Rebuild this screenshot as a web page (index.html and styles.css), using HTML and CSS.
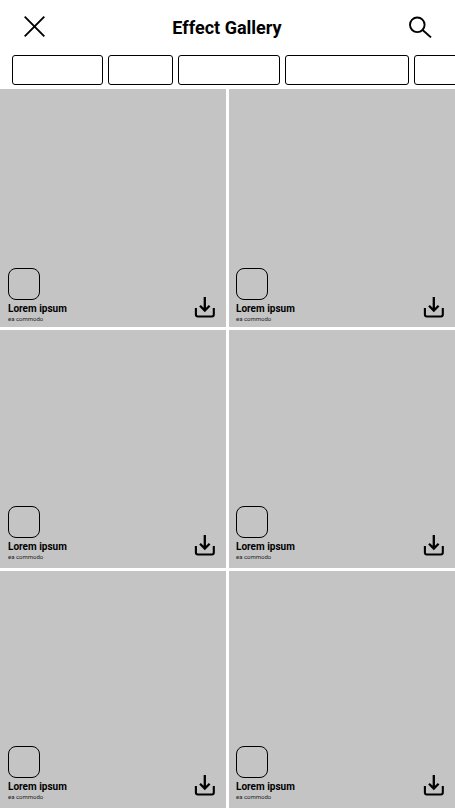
FILE: index.html
```html
<!DOCTYPE html>
<html lang="en">
<head>
    <meta charset="UTF-8">
    <meta name="viewport" content="width=device-width, initial-scale=1.0">
    <title>Effect Gallery</title>
    <link rel="stylesheet" href="styles.css">
</head>
<body>

<svg class="defs" width="0" height="0">
    <symbol id="icon-download" viewBox="0 0 21 21">
        <path d="M10.8 0V13.5M6 8.8L10.8 13.6L15.6 8.8" fill="none" stroke="#000" stroke-width="2.3"/>
        <path d="M1.9 11V17.5C1.9 18.8 2.6 19.5 3.9 19.5H17.8C19.1 19.5 19.8 18.8 19.8 17.5V11" fill="none" stroke="#000" stroke-width="2.1"/>
    </symbol>
</svg>

<header class="top-bar">
    <svg class="icon-close" width="21" height="21" viewBox="0 0 21 21">
        <path d="M0.7 0.7L20.3 20.3M20.3 0.7L0.7 20.3" fill="none" stroke="#000" stroke-width="1.9"/>
    </svg>
    <h1>Effect Gallery</h1>
    <svg class="icon-search" width="23" height="22" viewBox="0 0 23 22">
        <circle cx="8.3" cy="8.8" r="7.3" fill="none" stroke="#000" stroke-width="1.9"/>
        <path d="M13.6 14L22 21.4" fill="none" stroke="#000" stroke-width="1.9"/>
    </svg>
</header>

<div class="chips">
    <div class="chip chip-a"></div>
    <div class="chip chip-b"></div>
    <div class="chip chip-c"></div>
    <div class="chip chip-d"></div>
    <div class="chip chip-e"></div>
</div>

<main class="gallery">
    <div class="card first-row">
        <div class="info">
            <div class="avatar"></div>
            <div class="name">Lorem ipsum</div>
            <div class="sub">ea commodo</div>
        </div>
        <svg class="download" width="21" height="21"><use href="#icon-download"/></svg>
    </div>
    <div class="card first-row right">
        <div class="info">
            <div class="avatar"></div>
            <div class="name">Lorem ipsum</div>
            <div class="sub">ea commodo</div>
        </div>
        <svg class="download" width="21" height="21"><use href="#icon-download"/></svg>
    </div>
    <div class="card">
        <div class="info">
            <div class="avatar"></div>
            <div class="name">Lorem ipsum</div>
            <div class="sub">ea commodo</div>
        </div>
        <svg class="download" width="21" height="21"><use href="#icon-download"/></svg>
    </div>
    <div class="card right">
        <div class="info">
            <div class="avatar"></div>
            <div class="name">Lorem ipsum</div>
            <div class="sub">ea commodo</div>
        </div>
        <svg class="download" width="21" height="21"><use href="#icon-download"/></svg>
    </div>
    <div class="card">
        <div class="info">
            <div class="avatar"></div>
            <div class="name">Lorem ipsum</div>
            <div class="sub">ea commodo</div>
        </div>
        <svg class="download" width="21" height="21"><use href="#icon-download"/></svg>
    </div>
    <div class="card right">
        <div class="info">
            <div class="avatar"></div>
            <div class="name">Lorem ipsum</div>
            <div class="sub">ea commodo</div>
        </div>
        <svg class="download" width="21" height="21"><use href="#icon-download"/></svg>
    </div>
</main>

</body>
</html>
```

FILE: styles.css
```css
html, body {
    height: 100%;
}
body {
    margin: 0;
    background: #fff;
    color: #000;
    font-family: Roboto, sans-serif;
    overflow: hidden;
}
.defs {
    display: block;
    height: 0;
}
.top-bar {
    display: flex;
    justify-content: space-between;
    align-items: flex-start;
    height: 55px;
    padding: 16px 23px 0 24px;
    box-sizing: border-box;
}
.top-bar h1 {
    margin: 0;
    font-size: 18px;
    line-height: 24px;
    font-weight: 700;
}
.chips {
    display: flex;
    gap: 5px;
    height: 30px;
    padding-left: 12px;
    overflow: hidden;
}
.chip {
    flex: none;
    box-sizing: border-box;
    border: 1px solid #000;
    border-radius: 3px;
}
.chip-a { width: 91px; }
.chip-b { width: 65px; }
.chip-c { width: 102px; }
.chip-d { width: 124px; }
.chip-e { width: 91px; }
.gallery {
    display: grid;
    grid-template-columns: 226px 226px;
    grid-template-rows: 238px 238px 237px;
    gap: 3px;
    margin-top: 4px;
}
.card {
    display: flex;
    justify-content: space-between;
    align-items: flex-end;
    padding: 0 11px 7px 8px;
    box-sizing: border-box;
    background: #c4c4c4;
}
.first-row {
    padding-bottom: 4px;
}
.right {
    padding-left: 7px;
}
.info {
    display: flex;
    flex-direction: column;
}
.avatar {
    width: 32px;
    height: 32px;
    box-sizing: border-box;
    border: 1px solid #000;
    border-radius: 8px;
    margin-bottom: 3px;
}
.name {
    font-size: 10px;
    line-height: 12px;
    font-weight: 700;
}
.sub {
    font-size: 6px;
    line-height: 8px;
    color: #222;
}
.download {
    display: block;
    margin-bottom: 5px;
}
```
